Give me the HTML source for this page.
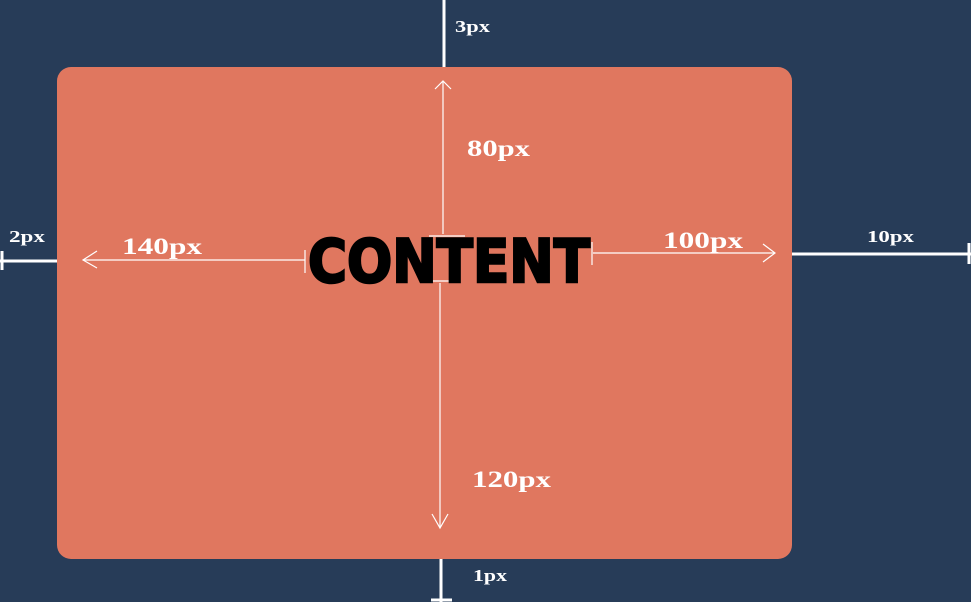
<!DOCTYPE html>
<html><head><style>html,body{margin:0;padding:0;background:#273c58;}svg{display:block}</style></head><body>
<svg width="971" height="602" viewBox="0 0 971 602" xmlns="http://www.w3.org/2000/svg">
<rect width="971" height="602" fill="#273c58"/>
<rect x="57" y="67" width="735" height="492" rx="14" fill="#e0775f"/>
<g stroke="#fff" stroke-width="3" fill="none">
<line x1="444" y1="0" x2="444" y2="67"/>
<line x1="441" y1="559" x2="441" y2="602"/>
<line x1="431" y1="600" x2="452" y2="600"/>
<line x1="0" y1="261" x2="57" y2="261"/>
<line x1="2" y1="251" x2="2" y2="270"/>
<line x1="792" y1="254" x2="971" y2="254"/>
<line x1="969" y1="243" x2="969" y2="264"/>
</g>
<g stroke="#fff" stroke-width="1.2" fill="none">
<line x1="443" y1="82" x2="443" y2="234"/>
<polyline points="435,89 443,81 451,89"/>
<line x1="429" y1="236" x2="465" y2="236"/>
<line x1="440" y1="283" x2="440" y2="527"/>
<polyline points="432,514 440,528 448,514"/>
<line x1="426" y1="281" x2="456" y2="281"/>
<line x1="83" y1="260" x2="305" y2="260"/>
<polyline points="97,251 83,260 97,268"/>
<line x1="305" y1="250" x2="305" y2="273"/>
<line x1="593" y1="253" x2="775" y2="253"/>
<polyline points="763,244 775,253 763,262"/>
<line x1="592" y1="242" x2="592" y2="265"/>
</g>
<text x="308" y="282" font-family="DejaVu Sans" font-weight="bold" font-size="60" textLength="282" lengthAdjust="spacingAndGlyphs" fill="#000" stroke="#000" stroke-width="2.5">CONTENT</text>
<g font-family="Liberation Serif" font-weight="bold" fill="#fff">
<text x="467" y="156" font-size="23" textLength="63" lengthAdjust="spacingAndGlyphs">80px</text>
<text x="122" y="254" font-size="23" textLength="80" lengthAdjust="spacingAndGlyphs">140px</text>
<text x="663" y="248" font-size="23" textLength="80" lengthAdjust="spacingAndGlyphs">100px</text>
<text x="472" y="487" font-size="23" textLength="79" lengthAdjust="spacingAndGlyphs">120px</text>
<text x="455" y="32" font-size="17" textLength="35" lengthAdjust="spacingAndGlyphs">3px</text>
<text x="9" y="242" font-size="17" textLength="36" lengthAdjust="spacingAndGlyphs">2px</text>
<text x="867" y="242" font-size="17" textLength="47" lengthAdjust="spacingAndGlyphs">10px</text>
<text x="473" y="581" font-size="17" textLength="34" lengthAdjust="spacingAndGlyphs">1px</text>
</g>
</svg>
</body></html>
